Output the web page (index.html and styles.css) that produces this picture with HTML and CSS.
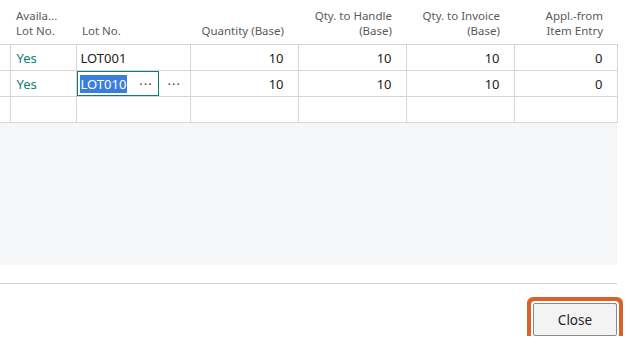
FILE: index.html
```html
<!DOCTYPE html>
<html lang="en">
<head>
  <meta charset="UTF-8" />
  <title>Item Tracking Lines</title>
  <link rel="stylesheet" href="styles.css">
</head>
<body>
  <div class="page">
    <table class="lines">
      <colgroup>
        <col class="c-mark">
        <col class="c-avail">
        <col class="c-lot">
        <col class="c-num">
        <col class="c-num">
        <col class="c-num">
        <col class="c-appl">
      </colgroup>
      <thead>
        <tr>
          <th></th>
          <th>Availa...<br>Lot No.</th>
          <th>Lot No.</th>
          <th class="num">Quantity (Base)</th>
          <th class="num">Qty. to Handle<br>(Base)</th>
          <th class="num">Qty. to Invoice<br>(Base)</th>
          <th class="num">Appl.-from<br>Item Entry</th>
        </tr>
      </thead>
      <tbody>
        <tr>
          <td></td>
          <td class="yes">Yes</td>
          <td>LOT001</td>
          <td class="num">10</td>
          <td class="num">10</td>
          <td class="num">10</td>
          <td class="num">0</td>
        </tr>
        <tr>
          <td></td>
          <td class="yes">Yes</td>
          <td class="editing">
            <div class="edit-row">
              <div class="edit-box"><span class="sel">LOT010</span><span class="dots">···</span></div>
              <span class="dots">···</span>
            </div>
          </td>
          <td class="num">10</td>
          <td class="num">10</td>
          <td class="num">10</td>
          <td class="num">0</td>
        </tr>
        <tr>
          <td></td><td></td><td></td><td></td><td></td><td></td><td></td>
        </tr>
      </tbody>
    </table>
    <div class="empty-area"></div>
    <div class="divider"></div>
    <div class="footer">
      <button class="close-btn">Close</button>
    </div>
  </div>
</body>
</html>
```

FILE: styles.css
```css
body {
  margin: 0;
  background-color: #ffffff;
  font-family: 'Noto Sans', 'Open Sans', sans-serif;
  color: #212121;
}
.page {
  width: 617px;
}
.lines {
  width: 617px;
  border-collapse: collapse;
  table-layout: fixed;
}
.c-mark { width: 10px; }
.c-avail { width: 66px; }
.c-lot { width: 114px; }
.c-num { width: 108px; }
.c-appl { width: 103px; }
.lines th {
  height: 38px;
  padding: 0 6px 6px 6px;
  font-size: 11.5px;
  font-weight: normal;
  line-height: 15px;
  color: #5a5a5a;
  text-align: left;
  vertical-align: bottom;
  border-bottom: 1px solid #d6d6d6;
}
.lines th.num {
  text-align: right;
  padding-right: 14px;
}
.lines td {
  height: 25px;
  padding: 0 4px;
  font-size: 13px;
  border: 1px solid #d6d6d6;
  white-space: nowrap;
}
.lines td:first-child {
  border-left: none;
}
.lines td.num {
  text-align: right;
  padding-right: 14px;
}
.lines td.yes {
  color: #107c7c;
  padding-left: 6px;
}
.lines td.editing {
  padding: 0;
}
.edit-row {
  display: flex;
  align-items: center;
}
.edit-box {
  display: flex;
  align-items: center;
  border: 1px solid #0f7b7b;
  padding-left: 2px;
  box-sizing: border-box;
  width: 82px;
  height: 25px;
}
.sel {
  background-color: #3b7ddd;
  color: #ffffff;
  line-height: 18px;
  padding: 0 1px;
}
.dots {
  font-size: 13px;
  color: #444;
  margin-left: 12px;
  letter-spacing: 1px;
}
.edit-row > .dots {
  margin-left: 9px;
}
.empty-area {
  height: 142px;
  background-color: #f5f6f7;
}
.divider {
  margin-top: 18px;
  height: 1px;
  background-color: #d0d0d0;
}
.footer {
  display: flex;
  justify-content: flex-end;
  padding-top: 19px;
}
.close-btn {
  width: 84px;
  height: 33px;
  font-family: 'Noto Sans', 'Open Sans', sans-serif;
  font-size: 13.5px;
  color: #252525;
  background-color: #f3f3f3;
  border: 1px solid #8a8a8a;
  border-radius: 2px;
  box-shadow: 0 0 0 2px #ffffff, 0 0 0 6px #d9622b;
  cursor: pointer;
}
```
